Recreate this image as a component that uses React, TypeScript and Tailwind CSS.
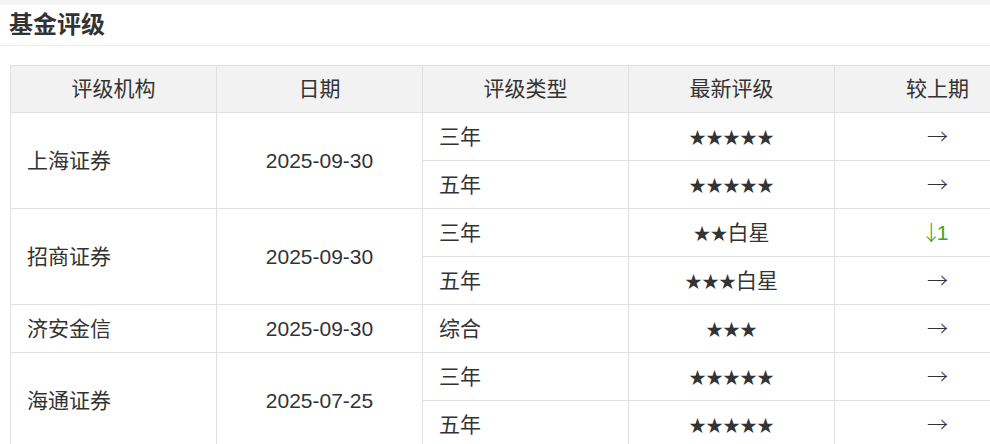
const rows = [
  {
    org: '上海证券',
    date: '2025-09-30',
    items: [
      {type: '三年', stars: '★★★★★', note: '', change: '→'},
      {type: '五年', stars: '★★★★★', note: '', change: '→'},
    ],
  },
  {
    org: '招商证券',
    date: '2025-09-30',
    items: [
      {type: '三年', stars: '★★', note: '白星', change: '↓', delta: '1'},
      {type: '五年', stars: '★★★', note: '白星', change: '→'},
    ],
  },
  {
    org: '济安金信',
    date: '2025-09-30',
    items: [{type: '综合', stars: '★★★', note: '', change: '→'}],
  },
  {
    org: '海通证券',
    date: '2025-07-25',
    items: [
      {type: '三年', stars: '★★★★★', note: '', change: '→'},
      {type: '五年', stars: '★★★★★', note: '', change: '→'},
    ],
  },
]

const headers = ['评级机构', '日期', '评级类型', '最新评级', '较上期']

export default function App() {
  return (
    <div
      className="w-[990px] h-[444px] overflow-hidden bg-white text-[#333]"
      style={{fontFamily: '"Liberation Sans", "Noto Sans CJK SC", sans-serif'}}
    >
      <div className="h-[5px] bg-[#f4f4f4]" />
      {/* Title */}
      <div className="h-[41px] px-[9px] flex items-center border-b border-[#ececec]">
        <h2 className="text-[24px] font-bold text-[#333] leading-none">基金评级</h2>
      </div>

      {/* Table */}
      <div className="pt-[19px] pl-[10px]">
        <table className="border-collapse table-fixed w-[1030px] text-[21px]">
          <colgroup>
            <col className="w-[206px]" />
            <col className="w-[206px]" />
            <col className="w-[206px]" />
            <col className="w-[206px]" />
            <col className="w-[206px]" />
          </colgroup>
          <thead>
            <tr className="h-[47px] bg-[#f2f2f2]">
              {headers.map((h) => (
                <th key={h} className="border border-[#e0e0e0] font-normal text-center">
                  {h}
                </th>
              ))}
            </tr>
          </thead>
          <tbody>
            {rows.map((r) =>
              r.items.map((it, i) => (
                <tr key={r.org + it.type} className="h-[48px]">
                  {i === 0 && (
                    <>
                      <td rowSpan={r.items.length} className="border border-[#e0e0e0] pl-[16px]">
                        {r.org}
                      </td>
                      <td rowSpan={r.items.length} className="border border-[#e0e0e0] text-center">
                        {r.date}
                      </td>
                    </>
                  )}
                  <td className="border border-[#e0e0e0] pl-[16px]">{it.type}</td>
                  <td className="border border-[#e0e0e0] text-center">
                    <span className="text-[17px]">{it.stars}</span>
                    {it.note}
                  </td>
                  <td
                    className={
                      it.delta
                        ? 'border border-[#e0e0e0] text-center text-[#3aa51f]'
                        : 'border border-[#e0e0e0] text-center'
                    }
                  >
                    <span
                      style={{fontFamily: '"Noto Sans CJK SC", sans-serif'}}
                      className={it.delta ? 'font-light -ml-[6px] tracking-[-5px]' : 'font-light'}
                    >
                      {it.change}
                    </span>
                    {it.delta}
                  </td>
                </tr>
              )),
            )}
          </tbody>
        </table>
      </div>
    </div>
  )
}
